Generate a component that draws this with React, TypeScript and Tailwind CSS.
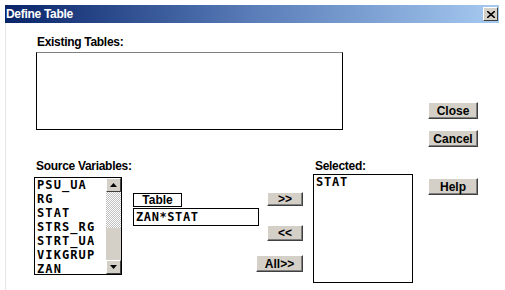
import React from 'react'

const sourceVars = ['PSU_UA', 'RG', 'STAT', 'STRS_RG', 'STRT_UA', 'VIKGRUP', 'ZAN']

function WinButton({ label, className }: { label: string; className: string }) {
  return (
    <button
      className={`flex items-center justify-center bg-[#d4d0c8] border border-t-white border-l-white border-r-[#404040] border-b-[#404040] shadow-[inset_-1px_-1px_0_#808080] text-[12px] font-bold leading-none text-black ${className}`}
    >
      {label}
    </button>
  )
}

function ArrowBox({ dir }: { dir: 'up' | 'down' }) {
  return (
    <div className="flex h-[14px] w-[15px] items-center justify-center bg-[#d4d0c8] border border-t-white border-l-white border-r-[#404040] border-b-[#404040]">
      <svg width="7" height="4" viewBox="0 0 7 4">
        {dir === 'up' ? <polygon points="3.5,0 7,4 0,4" fill="#000" /> : <polygon points="0,0 7,0 3.5,4" fill="#000" />}
      </svg>
    </div>
  )
}

export default function App() {
  return (
    <div className="h-[290px] w-[505px] bg-white pt-[5px] pl-[5px] font-['Liberation_Sans',Arial,sans-serif]">
      {/* Title bar */}
      <div className="flex h-[18px] w-[494px] items-center justify-between bg-gradient-to-r from-[#0a246a] via-[#5a7cb8] to-[#a6caf0] pl-[1px] pr-[1px]">
        <span className="text-[12px] font-bold tracking-[-0.3px] text-white">Define Table</span>
        <div className="flex h-[14px] w-[15px] items-center justify-center bg-[#d4d0c8] border border-t-white border-l-white border-r-[#404040] border-b-[#404040]">
          <svg width="8" height="7" viewBox="0 0 8 7">
            <path d="M0 0 L8 7 M8 0 L0 7" stroke="#000" strokeWidth="1.6" />
          </svg>
        </div>
      </div>

      <div className="h-[267px] w-[494px] border-l border-[#e6e6e6]">
        {/* Existing tables row */}
        <div className="flex h-[107px] items-start">
          <div className="mt-[12px] pl-[30px]">
            <div className="h-[14px] whitespace-nowrap pl-[1px] text-[12px] font-bold leading-[14px] tracking-[-0.3px]">Existing Tables:</div>
            <div className="mt-[3px] h-[78px] w-[307px] border border-black border-t-[#808080] bg-white" />
          </div>
          <div className="ml-[85px] mt-[79px] flex flex-col">
            <WinButton label="Close" className="h-[17px] w-[50px]" />
            <WinButton label="Cancel" className="mt-[11px] h-[17px] w-[50px]" />
          </div>
        </div>

        {/* Variables row */}
        <div className="mt-[29px] flex items-start pl-[28px]">
          <div className="w-[88px]">
            <div className="h-[14px] whitespace-nowrap pl-[2px] text-[12px] font-bold leading-[14px] tracking-[-0.3px]">Source Variables:</div>
            <div className="mt-[4px] flex h-[98px] w-[88px] border border-black bg-white">
              <div className="flex-1 pl-[2px] font-['DejaVu_Sans_Mono',monospace] text-[12px] font-bold leading-[14px] tracking-[1.1px]">
                {sourceVars.map((v) => (
                  <div key={v} className="h-[14px] whitespace-nowrap">
                    {v}
                  </div>
                ))}
              </div>
              <div className="flex w-[15px] flex-col">
                <ArrowBox dir="up" />
                <div className="h-[36px] bg-[repeating-conic-gradient(#c0c0c0_0_25%,#ffffff_0_50%)] bg-[length:2px_2px]" />
                <div className="flex-1 bg-[#d4d0c8]" />
                <ArrowBox dir="down" />
              </div>
            </div>
          </div>

          <div className="ml-[11px] mt-[34px] w-[126px]">
            <div className="flex h-[14px] w-[49px] items-center justify-center border border-black text-[12px] font-bold leading-none">
              Table
            </div>
            <div className="mt-[1px] flex h-[18px] w-[126px] items-center border border-black pl-[2px] font-['DejaVu_Sans_Mono',monospace] text-[12px] font-bold tracking-[0.6px]">
              ZAN*STAT
            </div>
          </div>

          <div className="ml-[-3px] flex w-[47px] flex-col items-end">
            <WinButton label=">>" className="mt-[33px] h-[14px] w-[36px]" />
            <WinButton label="<<" className="mt-[19px] h-[16px] w-[36px]" />
            <WinButton label="All>>" className="mt-[14px] h-[17px] w-[47px]" />
          </div>

          <div className="ml-[10px] w-[100px]">
            <div className="h-[14px] pl-[2px] text-[12px] font-bold leading-[14px] tracking-[-0.3px]">Selected:</div>
            <div className="mt-[1px] h-[109px] w-[100px] border border-black bg-white pl-[2px] font-['DejaVu_Sans_Mono',monospace] text-[12px] font-bold leading-[14px] tracking-[0.8px]">
              STAT
            </div>
          </div>

          <WinButton label="Help" className="ml-[15px] mt-[19px] h-[17px] w-[50px]" />
        </div>
      </div>
    </div>
  )
}
